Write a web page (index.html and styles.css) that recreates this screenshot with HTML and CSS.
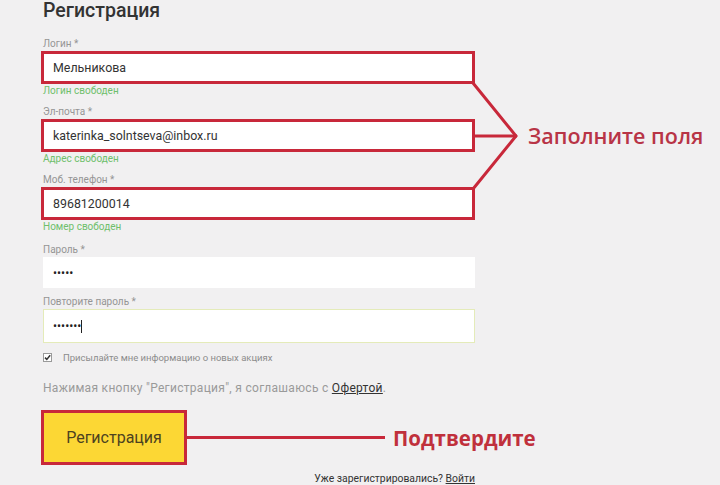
FILE: index.html
```html
<!DOCTYPE html>
<html lang="ru">
<head>
<meta charset="utf-8">
<title>Регистрация</title>
<link rel="stylesheet" href="styles.css">
</head>
<body>
<div class="page">
  <h1 class="title">Регистрация</h1>

  <div class="group g1">
    <div class="label">Логин *</div>
    <div class="input marked">Мельникова</div>
    <div class="ok">Логин свободен</div>
  </div>

  <div class="group g2">
    <div class="label">Эл-почта *</div>
    <div class="input marked">katerinka_solntseva@inbox.ru</div>
    <div class="ok">Адрес свободен</div>
  </div>

  <div class="group g3">
    <div class="label">Моб. телефон *</div>
    <div class="input marked">89681200014</div>
    <div class="ok">Номер свободен</div>
  </div>

  <div class="group g4">
    <div class="label">Пароль *</div>
    <div class="input plain"><span class="dots">•••••</span></div>
  </div>

  <div class="group g5">
    <div class="label">Повторите пароль *</div>
    <div class="input focus"><span class="dots">•••••••</span><span class="caret"></span></div>
  </div>

  <label class="check-row">
    <span class="checkbox">
      <svg width="9" height="9" viewBox="0 0 9 9"><rect x="0.5" y="0.5" width="8" height="8" fill="#fff" stroke="#9a9a9a"/><path d="M2 4.6 L3.8 6.4 L7.2 2.2" fill="none" stroke="#333" stroke-width="1.5"/></svg>
    </span>
    <span class="check-text">Присылайте мне информацию о новых акциях</span>
  </label>

  <p class="agree">Нажимая кнопку "Регистрация", я соглашаюсь с <a class="link" href="#">Офертой</a>.</p>

  <div class="submit-row">
    <button class="btn" type="button">Регистрация</button>
    <span class="pointer-line"></span>
    <span class="note">Подтвердите</span>
  </div>

  <p class="footer">Уже зарегистрировались? <a class="link" href="#">Войти</a></p>
</div>

<svg class="connector" width="720" height="485" viewBox="0 0 720 485">
  <polyline points="473,83 516,136 473,189" fill="none" stroke="#c8283a" stroke-width="3"/>
  <line x1="474" y1="136" x2="517" y2="136" stroke="#c8283a" stroke-width="3"/>
</svg>
<div class="note fill-note">Заполните поля</div>
</body>
</html>
```

FILE: styles.css
```css
html, body {
  margin: 0;
  padding: 0;
}
body {
  background: #f1f0f1;
  font-family: Roboto, "Liberation Sans", sans-serif;
  color: #333;
  width: 720px;
  height: 485px;
  overflow: hidden;
  position: relative;
}
.page {
  width: 432px;
  padding-left: 43px;
}
.title {
  margin: -1px 0 0;
  font-size: 19.5px;
  line-height: 24px;
  font-weight: 500;
  color: #333;
}
.group {
  display: flex;
  flex-direction: column;
}
.g1 { margin-top: 15px; }
.g2 { margin-top: 9px; }
.g3 { margin-top: 9px; }
.g4 { margin-top: 11px; }
.g5 { margin-top: 8px; }
.label {
  font-size: 10px;
  line-height: 12px;
  color: #959595;
  margin-bottom: 1px;
}
.ok {
  font-size: 10px;
  line-height: 12px;
  color: #6fbf6c;
  margin-top: 1px;
}
.input {
  box-sizing: border-box;
  background: #fff;
  display: flex;
  align-items: center;
  font-size: 12.4px;
  color: #333;
  padding-left: 10px;
  width: 432px;
}
.input.marked {
  height: 33px;
  width: 434px;
  margin-left: -2px;
  border: 3px solid #c8283a;
  padding-left: 9px;
}
.input.plain {
  height: 31px;
}
.input.focus {
  height: 34px;
  border: 1px solid #e4ebb9;
  padding-left: 9px;
}
.dots {
  font-size: 12px;
  letter-spacing: 0;
  color: #222;
}
.caret {
  display: inline-block;
  width: 1px;
  height: 13px;
  background: #222;
  margin-left: 0;
}
.check-row {
  display: flex;
  align-items: center;
  margin-top: 8px;
  height: 12px;
}
.checkbox {
  display: flex;
  width: 9px;
  height: 9px;
}
.check-text {
  margin-left: 11px;
  font-size: 9.5px;
  color: #8c8c8c;
}
.agree {
  margin: 18px 0 0;
  font-size: 12px;
  letter-spacing: 0.3px;
  line-height: 14px;
  color: #9a9a9a;
  white-space: nowrap;
}
.link {
  color: #333;
  text-decoration: underline;
}
.submit-row {
  display: flex;
  align-items: center;
  margin-top: 15px;
  margin-left: -2px;
  white-space: nowrap;
}
.btn {
  flex-shrink: 0;
  box-sizing: border-box;
  width: 146px;
  height: 55px;
  border: 3px solid #c8283a;
  background: #fcd734;
  color: #4d4220;
  font-family: Roboto, "Liberation Sans", sans-serif;
  font-size: 16px;
  padding: 0;
  margin: 0;
}
.pointer-line {
  flex-shrink: 0;
  width: 198px;
  height: 3px;
  background: #c8283a;
}
.note {
  flex-shrink: 0;
  font-family: "Open Sans", Roboto, sans-serif;
  font-size: 20.5px;
  line-height: 24px;
  font-weight: 700;
  color: #c0303c;
  margin-left: 8px;
}
.footer {
  margin: 8px 0 0;
  font-size: 10.4px;
  line-height: 12px;
  text-align: right;
  color: #333;
  white-space: nowrap;
}
.connector {
  position: absolute;
  left: 0;
  top: 0;
  pointer-events: none;
}
.fill-note {
  position: absolute;
  left: 528px;
  top: 124px;
  margin: 0;
  font-size: 21.5px;
  font-weight: 600;
  color: #b83446;
  white-space: nowrap;
}
```
